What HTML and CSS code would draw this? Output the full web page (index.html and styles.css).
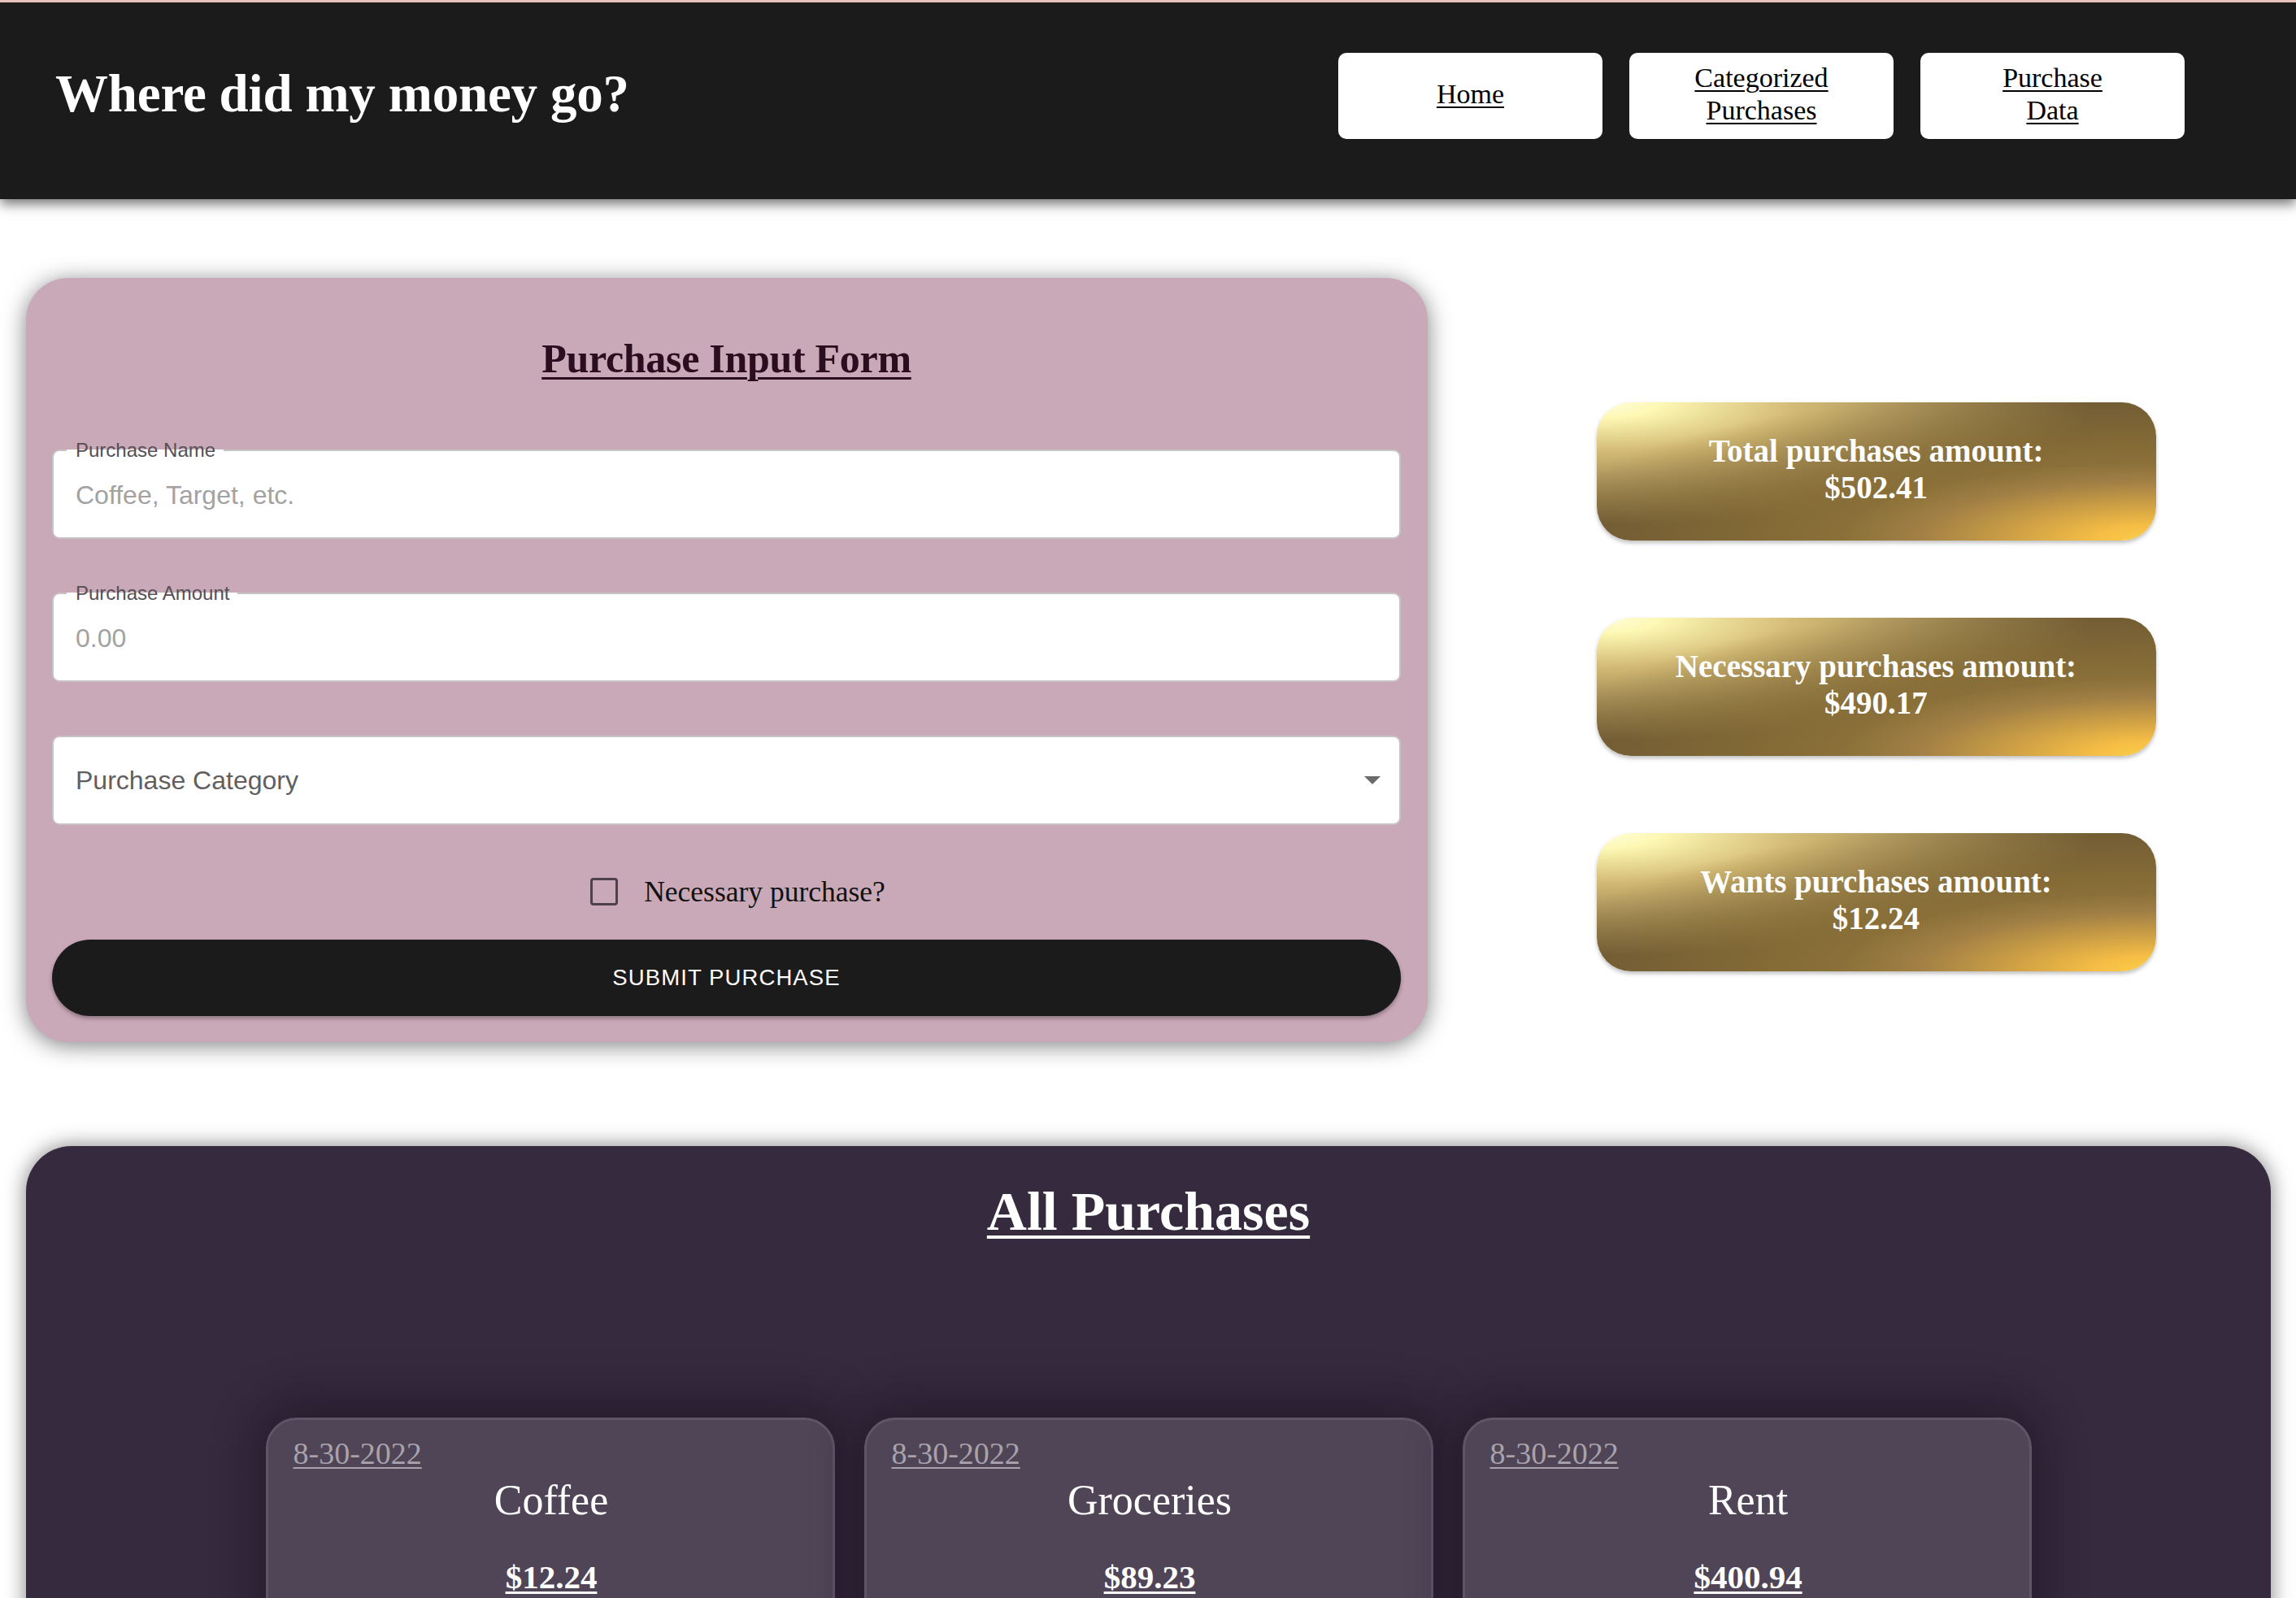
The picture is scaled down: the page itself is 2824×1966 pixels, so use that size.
FILE: index.html
```html
<!DOCTYPE html>
<html lang="en">
<head>
<meta charset="utf-8">
<title>Where did my money go?</title>
<link rel="stylesheet" href="styles.css">
</head>
<body>
<header class="topbar">
  <h1 class="brand">Where did my money go?</h1>
  <nav class="nav">
    <a class="nav-btn" href="#">Home</a>
    <a class="nav-btn" href="#">Categorized Purchases</a>
    <a class="nav-btn" href="#">Purchase Data</a>
  </nav>
</header>

<main class="main">
  <section class="top-row">
    <form class="form-card">
      <h2 class="form-title">Purchase Input Form</h2>
      <div class="fields">
        <div class="field">
          <label class="field-label">Purchase Name</label>
          <input class="field-input" type="text" placeholder="Coffee, Target, etc.">
        </div>
        <div class="field">
          <label class="field-label">Purchase Amount</label>
          <input class="field-input" type="text" placeholder="0.00">
        </div>
        <div class="field">
          <span class="select-text">Purchase Category</span>
          <svg class="select-arrow" width="20" height="10" viewBox="0 0 20 10"><path d="M0 0 L20 0 L10 10 Z" fill="#6b6b6b"/></svg>
        </div>
      </div>
      <label class="check-row">
        <input class="check" type="checkbox">
        <span class="check-text">Necessary purchase?</span>
      </label>
      <button class="submit" type="button">Submit Purchase</button>
    </form>

    <aside class="totals">
      <div class="gold">Total purchases amount:<br>$502.41</div>
      <div class="gold">Necessary purchases amount:<br>$490.17</div>
      <div class="gold">Wants purchases amount:<br>$12.24</div>
    </aside>
  </section>

  <section class="all">
    <h2 class="all-title">All Purchases</h2>
    <div class="cards">
      <article class="pcard">
        <div class="pdate">8-30-2022</div>
        <div class="pname">Coffee</div>
        <div class="pprice">$12.24</div>
      </article>
      <article class="pcard">
        <div class="pdate">8-30-2022</div>
        <div class="pname">Groceries</div>
        <div class="pprice">$89.23</div>
      </article>
      <article class="pcard">
        <div class="pdate">8-30-2022</div>
        <div class="pname">Rent</div>
        <div class="pprice">$400.94</div>
      </article>
    </div>
  </section>
</main>
</body>
</html>
```

FILE: styles.css
```css
* { box-sizing: border-box; }

html, body {
  margin: 0;
  padding: 0;
  background: #ffffff;
}

body {
  border-top: 3px solid #e6c3bb;
  font-family: "Liberation Serif", "Times New Roman", serif;
  overflow: hidden;
}

/* ---------- header ---------- */
.topbar {
  position: relative;
  z-index: 2;
  height: 242px;
  background: #1b1b1b;
  display: flex;
  align-items: center;
  justify-content: space-between;
  padding: 0 137px 12px 68px;
  box-shadow: 0 6px 14px rgba(0, 0, 0, 0.55);
}

.brand {
  margin: 0 0 5px;
  color: #ffffff;
  font-family: "Liberation Serif", serif;
  font-weight: 700;
  font-size: 65px;
  line-height: 1;
  letter-spacing: -0.2px;
}

.nav {
  display: flex;
  gap: 33px;
}

.nav-btn {
  width: 325px;
  height: 106px;
  padding: 0 66px 5px;
  background: #ffffff;
  border-radius: 10px;
  display: flex;
  align-items: center;
  justify-content: center;
  text-align: center;
  color: #000000;
  font-family: "Liberation Serif", serif;
  font-size: 34px;
  line-height: 40px;
  text-decoration: underline;
  text-decoration-thickness: 2px;
  text-underline-offset: 4px;
}

/* ---------- top row ---------- */
.main {
  padding: 97px 31px 0 32px;
}

.top-row {
  display: flex;
}

.form-card {
  width: 1724px;
  flex: none;
  background: #c9a8b7;
  border-radius: 52px;
  padding: 69px 33px 32px 32px;
  box-shadow: 0 4px 28px rgba(0, 0, 0, 0.5);
  display: flex;
  flex-direction: column;
}

.form-title {
  margin: 0 0 82px;
  text-align: center;
  color: #2a0d1f;
  font-family: "Liberation Serif", serif;
  font-weight: 700;
  font-size: 50px;
  line-height: 60px;
  letter-spacing: -0.3px;
  text-decoration: underline;
  text-decoration-thickness: 3px;
  text-underline-offset: 6px;
}

.fields {
  display: flex;
  flex-direction: column;
  gap: 66px;
}

.field {
  position: relative;
  height: 110px;
  background: #ffffff;
  border: 2px solid #c7c3c5;
  border-radius: 9px;
  display: flex;
  align-items: center;
  padding: 0 27px;
}

.field-label {
  position: absolute;
  top: -13px;
  left: 16px;
  padding: 0 10px 0 11px;
  font-family: "Liberation Sans", Arial, sans-serif;
  font-size: 24px;
  line-height: 24px;
  color: #555055;
  background: linear-gradient(to bottom, transparent 11px, #ffffff 11px);
}

.field-input {
  width: 100%;
  border: none;
  outline: none;
  background: transparent;
  padding: 0;
  margin-top: 2px;
  font-family: "Liberation Sans", Arial, sans-serif;
  font-size: 32px;
  color: #333333;
}

.field-input::placeholder {
  color: #a2a2a2;
  opacity: 1;
}

.select-text {
  flex: 1;
  font-family: "Liberation Sans", Arial, sans-serif;
  font-size: 32px;
  color: #5f5f5f;
}

.select-arrow {
  margin-right: -4px;
}

.check-row {
  margin-top: 65px;
  height: 34px;
  padding-left: 28px;
  display: flex;
  align-items: center;
  justify-content: center;
  gap: 32px;
}

.check {
  appearance: none;
  -webkit-appearance: none;
  margin: 0;
  width: 34px;
  height: 34px;
  border: 3px solid #4d414c;
  border-radius: 4px;
  background: transparent;
}

.check-text {
  font-family: "Liberation Serif", serif;
  font-size: 35.5px;
  color: #111111;
}

.submit {
  margin-top: 42px;
  height: 94px;
  width: 100%;
  border: none;
  border-radius: 47px;
  background: #1b1b1b;
  color: #ffffff;
  font-family: "Liberation Sans", Arial, sans-serif;
  font-size: 27.5px;
  letter-spacing: 1.1px;
  text-transform: uppercase;
  box-shadow: 0 3px 5px rgba(0, 0, 0, 0.3);
}

/* ---------- totals ---------- */
.totals {
  flex: 1;
  display: flex;
  flex-direction: column;
  align-items: center;
  gap: 95px;
  padding: 153px 0 0 66px;
}

.gold {
  width: 688px;
  height: 170px;
  padding-bottom: 6px;
  border-radius: 42px;
  display: flex;
  align-items: center;
  justify-content: center;
  text-align: center;
  color: #ffffff;
  font-family: "Liberation Serif", serif;
  font-weight: 700;
  font-size: 39px;
  line-height: 45px;
  background:
    radial-gradient(ellipse farthest-corner at right bottom, #fbd04a 0%, #f5bd45 8%, #a28045 30%, #8a7038 40%, transparent 80%),
    radial-gradient(ellipse farthest-corner at left top, #fffde0 0%, #fdf8b4 8%, #d3bb76 25%, #6c5732 62.5%, #6c5732 100%);
  box-shadow: 0 3px 5px rgba(0, 0, 0, 0.25);
}

/* ---------- all purchases ---------- */
.all {
  margin-top: 128px;
  min-height: 700px;
  background: #352a3e;
  border-radius: 56px 56px 0 0;
  padding-top: 41px;
  box-shadow: 0 0 26px rgba(0, 0, 0, 0.5);
}

.all-title {
  margin: 0;
  text-align: center;
  color: #ffffff;
  font-family: "Liberation Serif", serif;
  font-weight: 700;
  font-size: 68px;
  line-height: 78px;
  text-decoration: underline;
  text-decoration-thickness: 4px;
  text-underline-offset: 7px;
}

.cards {
  margin-top: 215px;
  display: flex;
  justify-content: center;
  gap: 36px;
}

.pcard {
  width: 700px;
  height: 330px;
  background: #4f4557;
  border: 3px solid #5e5568;
  border-radius: 38px 38px 0 0;
  padding: 21px 28px 0 31px;
  box-shadow: 0 -10px 60px 6px rgba(15, 8, 20, 0.45);
}

.pdate {
  color: #a7a2ab;
  font-family: "Liberation Serif", serif;
  font-size: 38px;
  line-height: 41px;
  text-decoration: underline;
  text-decoration-thickness: 2px;
  text-underline-offset: 4px;
}

.pname {
  margin-top: 7px;
  text-align: center;
  color: #ffffff;
  font-family: "Liberation Serif", serif;
  font-size: 52px;
  line-height: 60px;
}

.pprice {
  margin-top: 41px;
  text-align: center;
  color: #ffffff;
  font-family: "Liberation Serif", serif;
  font-weight: 700;
  font-size: 41px;
  line-height: 47px;
  text-decoration: underline;
  text-decoration-thickness: 3px;
  text-underline-offset: 4px;
}
```
